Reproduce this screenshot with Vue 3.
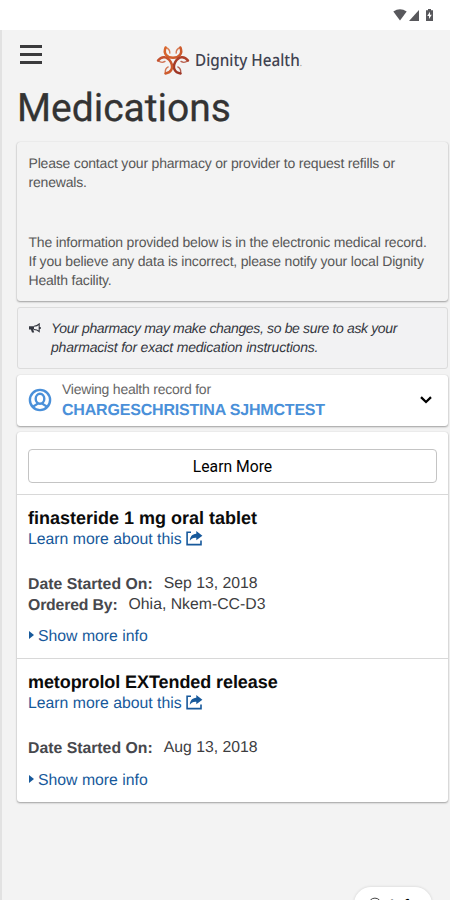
<script setup>
const petals = [0, 120, 240]
const medications = [
  {
    name: 'finasteride 1 mg oral tablet',
    cls: 'name-a',
    details: [
      { label: 'Date Started On:', value: 'Sep 13, 2018' },
      { label: 'Ordered By:', value: 'Ohia, Nkem-CC-D3', cls: 'snug' },
    ],
  },
  {
    name: 'metoprolol EXTended release',
    cls: 'name-b',
    details: [{ label: 'Date Started On:', value: 'Aug 13, 2018' }],
  },
]
</script>

<template>
  <div class="screen">
    <div class="status">
      <svg class="wifi" width="14" height="12" viewBox="0 0 14 12"><path d="M.3 2.6Q7-2.2 13.7 2.6L7 11.4Z" /></svg>
      <svg class="signal" width="10" height="11" viewBox="0 0 10 11"><path d="M10 0V11H0Z" /></svg>
      <svg class="battery" width="7" height="12" viewBox="0 0 7 12"><path d="M2 0H5V1.2H7V12H0V1.2H2Z" /><path class="bolt" d="M4 2.8L1.2 7H3V10L5.8 5.8H4Z" /></svg>
    </div>
    <div class="page">
      <header class="header">
        <div class="burger"><i></i><i></i><i></i></div>
        <div class="brand">
          <svg class="logo" width="34" height="32" viewBox="-17 -16.5 34 32">
            <defs>
              <linearGradient id="ember0" gradientUnits="userSpaceOnUse" x1="-10" y1="-12" x2="10" y2="-4">
                <stop offset="0" stop-color="#d9662c" />
                <stop offset="1" stop-color="#c9572c" />
              </linearGradient>
              <linearGradient id="ember120" gradientUnits="userSpaceOnUse" x1="-10" y1="-12" x2="10" y2="-12">
                <stop offset="0" stop-color="#b0432b" />
                <stop offset="1" stop-color="#9c3425" />
              </linearGradient>
              <linearGradient id="ember240" gradientUnits="userSpaceOnUse" x1="-10" y1="-12" x2="10" y2="-12">
                <stop offset="0" stop-color="#cf5c2c" />
                <stop offset="1" stop-color="#c2502f" />
              </linearGradient>
            </defs>
            <g fill="none" stroke-linecap="round" stroke-linejoin="round">
              <g v-for="a in petals" :key="a" :transform="`rotate(${a})`" :stroke="`url(#ember${a})`">
                <path stroke-width="2.5" d="M-7.4-13C-9.8-7.4-6.6-2.9 0-2.7C6.6-2.9 9.8-7.4 7.4-13" />
                <path stroke-width="1.4" stroke-opacity=".8" d="M-7.4-13C-4.6-12-3-9.6-3.2-7.4M7.4-13C4.6-12 3-9.6 3.2-7.4" />
              </g>
            </g>
          </svg>
          <span class="brand-name">Dignity Health<small>.</small></span>
        </div>
      </header>
      <h1>Medications</h1>
      <section class="card intro">
        <p>Please contact your pharmacy or provider to request refills or<br />renewals.</p>
        <p>The information provided below is in the electronic medical record.<br />If you believe any data is incorrect, please notify your local Dignity<br />Health facility.</p>
      </section>
      <section class="notice">
        <svg width="12" height="11" viewBox="0 0 12 11">
          <path fill="#343740" d="M0 3.2H5V6.6H4.2L5.2 9.6H3L1.9 6.6H0Z" />
          <path fill="none" stroke="#343740" stroke-width="1.1" d="M5 3.3Q8 3.1 10.2 1V8.6Q8 6.6 5 6.5M11.2 4V6" />
        </svg>
        <p><span class="tight">Your pharmacy may make changes, so be sure to ask your</span><br />pharmacist for exact medication instructions.</p>
      </section>
      <section class="card person">
        <svg class="avatar" width="24" height="24" viewBox="0 0 24 24" fill="none" stroke="#4a90d9" stroke-width="2.4">
          <circle cx="12" cy="12" r="10.1" />
          <ellipse cx="12" cy="10.8" rx="4.3" ry="5" />
          <path d="M5.2 18.8C6.6 16.8 8.6 17.2 9.9 15.4M18.8 18.8C17.4 16.8 15.4 17.2 14.1 15.4" />
        </svg>
        <div class="who">
          <div class="viewing">Viewing health record for</div>
          <div class="patient">CHARGESCHRISTINA SJHMCTEST</div>
        </div>
        <svg class="chevron" width="12" height="8" viewBox="0 0 12 8"><path d="M1 1.2L6 6L11 1.2" fill="none" stroke="#000" stroke-width="2.3" /></svg>
      </section>
      <section class="card list">
        <div class="top"><button>Learn More</button></div>
        <article v-for="m in medications" :key="m.name">
          <h2 :class="m.cls">{{ m.name }}</h2>
          <a class="learn">
            <span>Learn more about this</span>
            <svg width="17" height="15" viewBox="0 0 17 15">
              <path d="M5 1.2H1.1V13.6H15V9.6" fill="none" stroke="#17599b" stroke-width="1.6" />
              <path fill="#17599b" d="M10.3 0L16.4 4.7L10.3 9.3V6.7C7.3 6.5 5.4 7.3 3.8 9.8C4 5.8 6.1 2.9 10.3 2.7Z" />
            </svg>
          </a>
          <dl>
            <div v-for="d in m.details" :key="d.label" :class="d.cls"><dt>{{ d.label }}</dt><dd>{{ d.value }}</dd></div>
          </dl>
          <a class="more"><i></i><span>Show more info</span></a>
        </article>
      </section>
    </div>
    <div class="info">
      <svg width="15" height="15" viewBox="0 0 15 15"><circle cx="7.5" cy="7.5" r="6.9" fill="none" stroke="#333" /></svg>
      <span>Info</span>
    </div>
  </div>
</template>

<style>
body { background: #f3f3f3; }
</style>
<style scoped>
.screen { position: relative; width: 450px; height: 900px; overflow: hidden; box-sizing: border-box; background: #f3f3f3; font-family: "Liberation Sans", Arial, sans-serif; white-space: nowrap; text-rendering: geometricPrecision; }
.status { height: 30px; background: #fff; display: flex; justify-content: flex-end; align-items: flex-start; padding: 9px 17px 0 0; box-sizing: border-box; fill: #58585c; }
.wifi { margin-right: 2px; }
.signal { margin: 1px 7px 0 0; }
.bolt { fill: #fff; }
.page { height: 870px; box-sizing: border-box; padding: 0 2px 0 15px; border-left: 2px solid #e2e2e2; }
.header { display: flex; height: 56px; padding-left: 3px; }
.burger { padding-top: 15px; width: 22px; display: flex; flex-direction: column; gap: 5px; }
.burger i { height: 3px; background: #3a3a3c; }
.brand { display: flex; margin-left: 114px; padding-top: 14px; }
.brand-name { font: 500 16.7px/32px "Noto Sans", sans-serif; color: #3f4250; margin-left: 5px; transform: scaleX(.915); transform-origin: 0 50%; }
.brand-name small { font-size: 9px; color: #999; }
h1 { margin: 0; font: 400 39px/45px Roboto, sans-serif; color: #333; height: 56px; -webkit-text-stroke: .3px #333; }
.card { border-radius: 3px; box-shadow: 0 1px 2px rgba(0, 0, 0, .34), 0 0 1px rgba(0, 0, 0, .16); box-sizing: border-box; }
.intro { height: 159px; padding: 11.5px 11px; color: #575757; font-size: 14px; letter-spacing: -.19px; line-height: 19px; }
p { margin: 0; }
.intro p { padding-left: .5px; }
.intro p + p { margin-top: 41px; }
.notice { height: 62px; margin-top: 6px; border: 1px solid #dcdcdc; border-radius: 3px; background: #f2f2f3; box-sizing: border-box; display: flex; padding: 10.5px 11px; gap: 10px; color: #343740; font-size: 14px; letter-spacing: -.2px; line-height: 19px; font-style: italic; }
.tight { letter-spacing: -.35px; }
.notice svg { margin-top: 4px; flex: none; }
.person { height: 51px; margin-top: 6px; background: #fff; display: flex; align-items: center; padding: 0 16px 0 11px; }
.avatar { margin-bottom: 2px; }
.who { margin: 1px 0 0 10px; flex: 1; }
.viewing { color: #666; font-size: 14px; letter-spacing: -.23px; line-height: 19px; }
.patient { color: #4a90d9; font-weight: 700; font-size: 16px; letter-spacing: -.19px; line-height: 23px; }
.chevron { margin-bottom: 1px; }
.list { margin-top: 6px; height: 370px; background: #fff; }
.top { height: 62px; padding: 17px 11px 0; box-sizing: border-box; }
button { display: block; width: 100%; height: 34px; padding: 0; border: 1px solid #c4c4c4; border-radius: 4px; background: #fff; font: 400 15.7px/34px Roboto, sans-serif; color: #000; }
article { border-top: 1px solid #d8d8d8; padding: 13px 11px 0; height: 164px; box-sizing: border-box; }
h2 { margin: 0; font-size: 18px; line-height: 21px; color: #0b0b0b; }
.name-b { letter-spacing: -.08px; }
a { color: #17599b; font-size: 15.8px; line-height: 21px; display: flex; }
.learn svg { margin: 2px 0 0 4px; }
dl { margin: 23px 0 12px; }
dl div { display: flex; height: 21px; line-height: 21px; font-size: 15.8px; }
dl div:only-child { margin-bottom: 13px; }
dt { font-weight: 700; color: #47484d; padding-top: 1px; }
dd { margin: 0 0 0 11px; color: #3d3d3f; }
.snug dt { letter-spacing: -.16px; }
.more i { width: 0; height: 0; border: 4.5px solid transparent; border-left: 5px solid #17599b; border-right: 0; margin: 5px 4px 0 1px; }
.more { margin-top: -1px; }
.info { position: absolute; left: 354px; top: 887px; width: 78px; height: 34px; border-radius: 17px; background: #fff; box-shadow: 0 0 3px rgba(0, 0, 0, .15); display: flex; box-sizing: border-box; padding: 10px 14px; gap: 8px; font: 500 16px/17px Roboto, sans-serif; }
</style>
